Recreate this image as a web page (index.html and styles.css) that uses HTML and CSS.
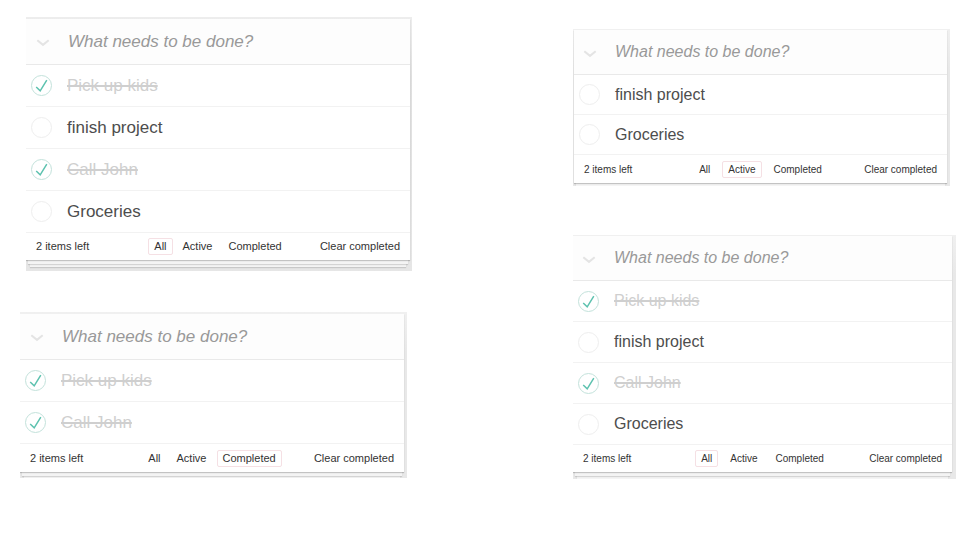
FILE: index.html
```
<!DOCTYPE html>
<html lang="en">
<head>
<meta charset="utf-8">
<meta name="viewport" content="width=device-width, initial-scale=1">
<title>Todos</title>
<link rel="stylesheet" href="styles.css">
</head>
<body>
<svg class="sprite" aria-hidden="true">
  <symbol id="check" viewBox="0 0 21 21"><path d="M5.2 12 L9.2 15.8 L15.8 5.2" fill="none" stroke="#5dc2af" stroke-width="1.5"/></symbol>
  <symbol id="chevron" viewBox="0 0 14 8"><path d="M1.3 1.2 L7 5.8 L12.7 1.2" fill="none" stroke="#e4e4e4" stroke-width="2.1"/></symbol>
</svg>
<main class="board">
  <div class="column column-left">
    <div class="stack stack-all">
      <section class="todo">
        <header class="entry">
          <button class="toggle-all" type="button" aria-label="Mark all as complete"><svg><use href="#chevron"/></svg></button>
          <input class="new-todo" type="text" placeholder="What needs to be done?" aria-label="New todo">
        </header>
        <ul class="items">
          <li><label class="item done"><span class="toggle"><input type="checkbox" checked><svg><use href="#check"/></svg></span><span class="title">Pick up kids</span></label></li>
          <li><label class="item"><span class="toggle"><input type="checkbox"></span><span class="title">finish project</span></label></li>
          <li><label class="item done"><span class="toggle"><input type="checkbox" checked><svg><use href="#check"/></svg></span><span class="title">Call John</span></label></li>
          <li><label class="item"><span class="toggle"><input type="checkbox"></span><span class="title">Groceries</span></label></li>
        </ul>
        <footer class="footer">
          <span class="count">2 items left</span>
          <nav class="filters"><a class="selected" href="#all">All</a><a href="#active">Active</a><a href="#completed">Completed</a></nav>
          <button class="clear" type="button">Clear completed</button>
        </footer>
      </section>
    </div>
    <div class="stack stack-completed">
      <section class="todo">
        <header class="entry">
          <button class="toggle-all" type="button" aria-label="Mark all as complete"><svg><use href="#chevron"/></svg></button>
          <input class="new-todo" type="text" placeholder="What needs to be done?" aria-label="New todo">
        </header>
        <ul class="items">
          <li><label class="item done"><span class="toggle"><input type="checkbox" checked><svg><use href="#check"/></svg></span><span class="title">Pick up kids</span></label></li>
          <li><label class="item done"><span class="toggle"><input type="checkbox" checked><svg><use href="#check"/></svg></span><span class="title">Call John</span></label></li>
        </ul>
        <footer class="footer">
          <span class="count">2 items left</span>
          <nav class="filters"><a href="#all">All</a><a href="#active">Active</a><a class="selected" href="#completed">Completed</a></nav>
          <button class="clear" type="button">Clear completed</button>
        </footer>
      </section>
    </div>
  </div>
  <div class="column column-right">
    <div class="stack stack-active">
      <section class="todo">
        <header class="entry">
          <button class="toggle-all" type="button" aria-label="Mark all as complete"><svg><use href="#chevron"/></svg></button>
          <input class="new-todo" type="text" placeholder="What needs to be done?" aria-label="New todo">
        </header>
        <ul class="items">
          <li><label class="item"><span class="toggle"><input type="checkbox"></span><span class="title">finish project</span></label></li>
          <li><label class="item"><span class="toggle"><input type="checkbox"></span><span class="title">Groceries</span></label></li>
        </ul>
        <footer class="footer">
          <span class="count">2 items left</span>
          <nav class="filters"><a href="#all">All</a><a class="selected" href="#active">Active</a><a href="#completed">Completed</a></nav>
          <button class="clear" type="button">Clear completed</button>
        </footer>
      </section>
    </div>
    <div class="stack stack-summary">
      <section class="todo">
        <header class="entry">
          <button class="toggle-all" type="button" aria-label="Mark all as complete"><svg><use href="#chevron"/></svg></button>
          <input class="new-todo" type="text" placeholder="What needs to be done?" aria-label="New todo">
        </header>
        <ul class="items">
          <li><label class="item done"><span class="toggle"><input type="checkbox" checked><svg><use href="#check"/></svg></span><span class="title">Pick up kids</span></label></li>
          <li><label class="item"><span class="toggle"><input type="checkbox"></span><span class="title">finish project</span></label></li>
          <li><label class="item done"><span class="toggle"><input type="checkbox" checked><svg><use href="#check"/></svg></span><span class="title">Call John</span></label></li>
          <li><label class="item"><span class="toggle"><input type="checkbox"></span><span class="title">Groceries</span></label></li>
        </ul>
        <footer class="footer">
          <span class="count">2 items left</span>
          <nav class="filters"><a class="selected" href="#all">All</a><a href="#active">Active</a><a href="#completed">Completed</a></nav>
          <button class="clear" type="button">Clear completed</button>
        </footer>
      </section>
    </div>
  </div>
</main>
</body>
</html>
```
FILE: styles.css
```
* {
  box-sizing: border-box;
}

body {
  margin: 0;
  background: #fff;
  color: #4d4d4d;
  font-family: "Liberation Sans", Arial, sans-serif;
}

.sprite {
  display: none;
}

.board {
  display: grid;
  grid-template-columns: 392fr 383fr;
  gap: 161px;
  padding: 17px 16px 32px 20px;
}

.column {
  display: flex;
  flex-direction: column;
}

.column-left {
  --text: 17px;
  --small: 11px;
  --head: 46px;
  --row: 42px;
  --filter-gap: 4px;
  gap: 41px;
}

.column-right {
  --text: 16px;
  --small: 10px;
  --head: 45px;
  --row: 41px;
  --filter-gap: 6px;
  gap: 49px;
  padding-top: 12px;
}

/* Grey backing that clips the stacked-paper shadow */
.stack {
  overflow: hidden;
  background: linear-gradient(#f0f0f0, #e8e8e8 40px);
}

.stack-all {
  margin-left: 6px;
  padding: 2px 2px 11px 0;
  background: linear-gradient(#ededed, #dfdfdf 60px, #e6e6e6);
}

.stack-completed {
  margin-right: 5px;
  padding: 2px 3px 6px 0;
}

.stack-active {
  --row: 40px;
  margin-right: 6px;
  padding: 1px 3px 3px 1px;
}

.stack-summary {
  padding: 1px 4px 7px 0;
}

.todo {
  background: #fff;
  box-shadow:
    0 1px 1px rgba(0, 0, 0, 0.2),
    0 6px 0 -2px #f4f4f4,
    0 7px 1px -2px rgba(0, 0, 0, 0.13),
    0 11px 0 -4px #f4f4f4,
    0 12px 1px -4px rgba(0, 0, 0, 0.13);
}

.entry {
  display: flex;
  align-items: center;
  min-height: var(--head);
  border-bottom: 1px solid #e9e9e9;
  background: #fdfdfd;
}

.toggle-all {
  display: flex;
  justify-content: center;
  align-items: center;
  flex: none;
  width: 33px;
  height: 30px;
  margin-right: 9px;
  padding: 3px 0 0;
  border: 0;
  background: none;
}

.column-right .toggle-all {
  width: 32px;
}

.toggle-all svg {
  width: 14px;
  height: 8px;
}

.new-todo {
  flex: 1;
  min-width: 0;
  padding: 0;
  border: 0;
  outline: 0;
  background: none;
  color: #4d4d4d;
  font: italic var(--text) "Liberation Sans", Arial, sans-serif;
}

.new-todo::placeholder {
  color: #999;
  opacity: 1;
}

.items {
  margin: 0;
  padding: 0;
  list-style: none;
}

.item {
  display: flex;
  align-items: center;
  gap: 15px;
  min-height: var(--row);
  padding-left: 5px;
  border-bottom: 1px solid #f2f2f2;
  font-size: var(--text);
  line-height: 20px;
}

.done {
  color: #cfcfcf;
}

.done .title {
  text-decoration: line-through 2px;
}

.toggle {
  display: grid;
  flex: none;
  width: 21px;
  height: 21px;
}

.toggle input,
.toggle svg {
  grid-area: 1 / 1;
  width: 21px;
  height: 21px;
  margin: 0;
}

.toggle input {
  appearance: none;
  border: 1px solid #eee;
  border-radius: 50%;
}

.toggle input:checked {
  border-color: #c3e2db;
}

.toggle svg {
  pointer-events: none;
}

.footer {
  display: grid;
  grid-template-columns: 1fr auto 1fr;
  align-items: center;
  min-height: 27px;
  padding: 0 10px;
  color: #333;
  font-size: var(--small);
  line-height: 15px;
}

.stack-completed .footer,
.stack-active .footer {
  min-height: 28px;
}

.filters {
  display: flex;
  gap: var(--filter-gap);
}

.filters a {
  padding: 0 5px;
  border: 1px solid transparent;
  border-radius: 2px;
  color: inherit;
  text-decoration: none;
}

.filters .selected {
  border-color: #f5e0e4;
}

.clear {
  justify-self: end;
  padding: 0;
  border: 0;
  background: none;
  color: inherit;
  font: inherit;
}
```
